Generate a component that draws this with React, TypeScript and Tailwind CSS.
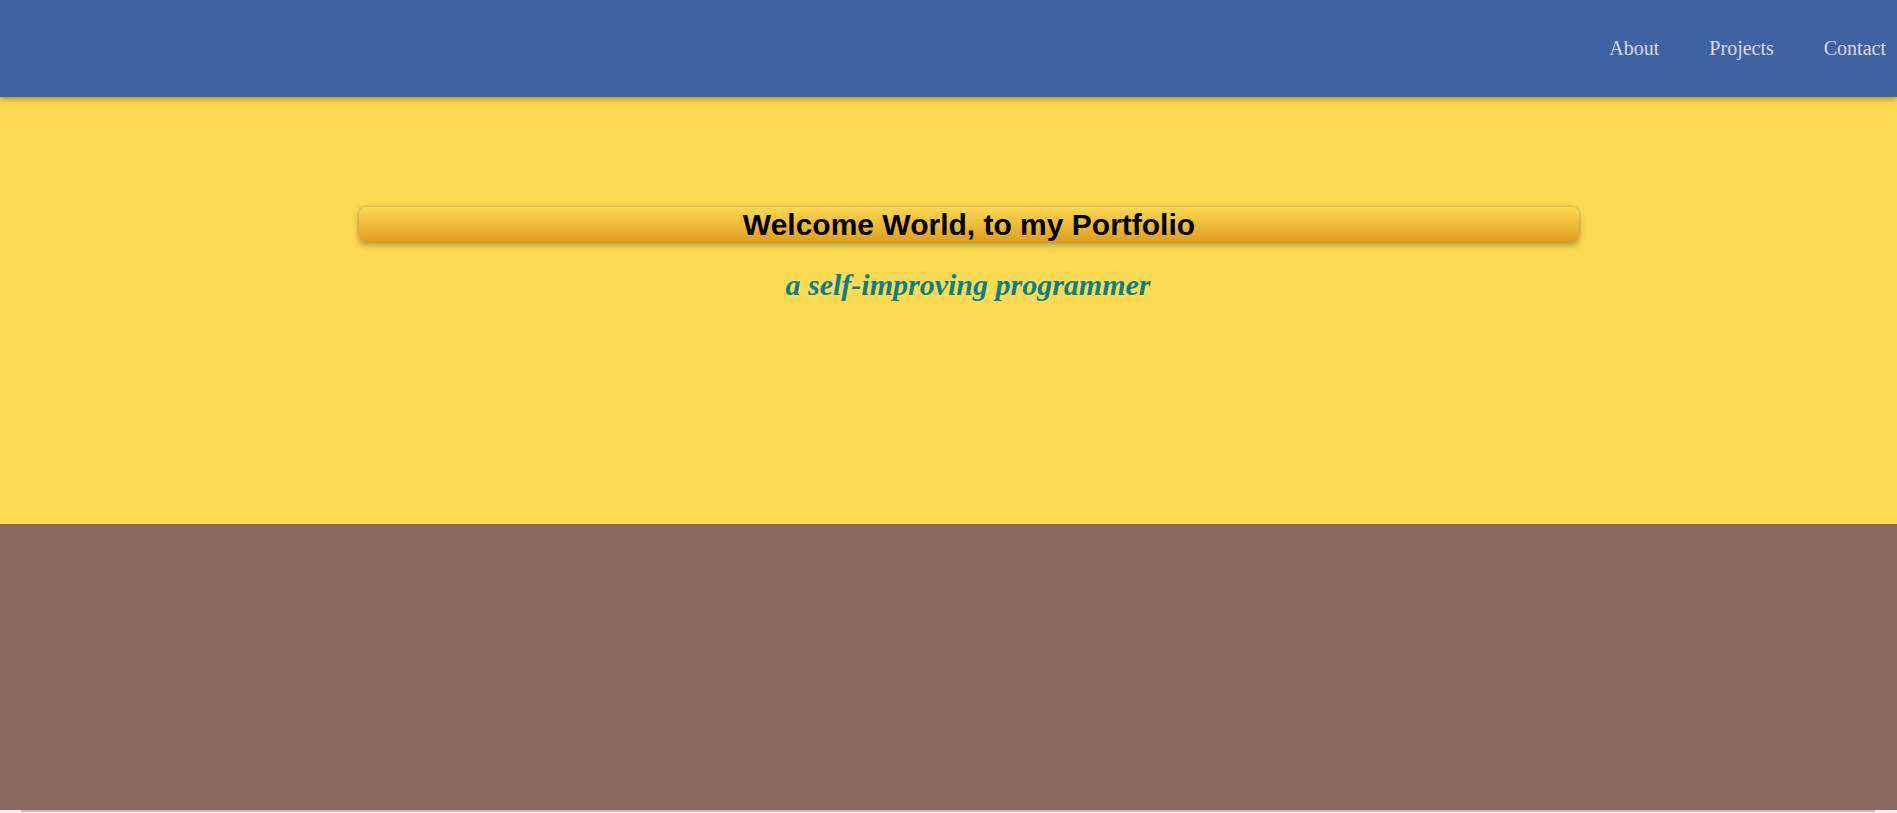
function App() {
  return (
    <div className="w-[1897px] h-[813px] overflow-hidden flex flex-col font-['Liberation_Serif',serif]">
      <nav className="relative z-10 h-[97px] shrink-0 bg-[#3f62a2] shadow-[0_2px_6px_rgba(0,0,0,0.35)] flex items-center justify-end pr-[11px] gap-[50px]">
        <a className="text-[20px] leading-[23px] text-[#d5dbef]">About</a>
        <a className="text-[20px] leading-[23px] text-[#d5dbef]">Projects</a>
        <a className="text-[20px] leading-[23px] text-[#d5dbef]">Contact</a>
      </nav>

      <section className="h-[427px] shrink-0 bg-[#fcda52] pt-[110px]">
        <h1 className="ml-[359px] w-[1220px] rounded-[7px] bg-gradient-to-b from-[#fcd952] to-[#df9d1f] shadow-[0_3px_6px_rgba(90,70,20,0.45),0_-1px_3px_rgba(90,70,20,0.2)] text-center font-['Liberation_Sans',sans-serif] font-bold text-[30px] leading-[35px] text-black">
          Welcome World, to my Portfolio
        </h1>
        <h2 className="mt-[26px] pl-[39px] text-center italic font-bold text-[30px] leading-[34px] text-[#0b7f86]">
          a self-improving programmer
        </h2>
      </section>

      <section className="h-[286px] shrink-0 bg-[#896b5e]" />

      <div className="h-[3px] shrink-0 bg-[#f1f1f1] flex">
        <div className="ml-[21px] mr-[22px] flex-1 h-[2px] bg-[#c1c1c1]" />
      </div>
    </div>
  );
}

export default App;
